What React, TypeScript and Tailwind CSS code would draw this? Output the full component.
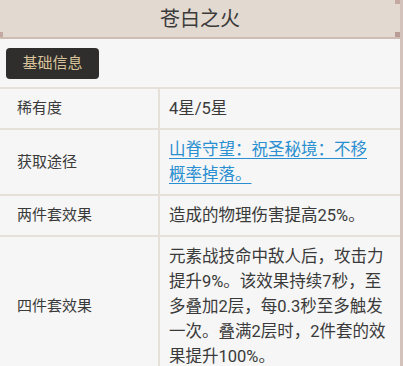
import React from "react";

interface RowType {
  label: string;
  value: React.ReactNode;
}

const rows: RowType[] = [
  { label: "稀有度", value: "4星/5星" },
  {
    label: "获取途径",
    value: (
      <a className="text-[#2a8fd0] underline underline-offset-[3px]">
        山脊守望：祝圣秘境：不移
        <br />
        概率掉落。
      </a>
    ),
  },
  { label: "两件套效果", value: "造成的物理伤害提高25%。" },
  {
    label: "四件套效果",
    value:
      "元素战技命中敌人后，攻击力提升9%。该效果持续7秒，至多叠加2层，每0.3秒至多触发一次。叠满2层时，2件套的效果提升100%。",
  },
];

const App = () => {
  return (
    <div className="w-[403px] h-[366px] overflow-hidden bg-[#f6f6f6] font-['Roboto','Noto_Sans_CJK_SC',sans-serif] text-[#3a3a3a]">
      <div className="h-full border-r-[3px] border-r-[#d3c1bb]">
        {/* title bar */}
        <div className="relative h-[39px] bg-[#e2d9d0] border-b-2 border-b-[#cdbdb4] flex items-center justify-center text-[20px] text-[#3b3b3b]">
          苍白之火
          <span className="absolute left-0 bottom-0 w-[3px] h-[5px] bg-[#c4a8a2]" />
          <span className="absolute right-0 top-0 w-[5px] h-[4px] bg-[#c4a8a2]" />
          <span className="absolute right-0 bottom-0 w-[5px] h-[5px] bg-[#b99c96]" />
        </div>

        <div className="pt-[9px]">
          <button className="ml-[6px] h-[31px] w-[93px] rounded-[4px] bg-[#2f2e2c] text-[#d9c49c] text-[15px] leading-none">
            基础信息
          </button>
        </div>

        <div className="mt-[8px] grid grid-cols-[160px_1fr] border-t-2 border-[#e6e0da]">
          {rows.map((row, index) => (
            <React.Fragment key={index}>
              <div className="flex items-center pl-[17px] text-[15px] leading-[25px] border-b-2 border-r-2 border-[#e6e0da]">
                {row.label}
              </div>
              <div className="pl-[9px] pr-[6px] py-[7px] text-[16.5px] leading-[25px] border-b-2 border-[#e6e0da]">
                {row.value}
              </div>
            </React.Fragment>
          ))}
        </div>
      </div>
    </div>
  );
};

export default App;
